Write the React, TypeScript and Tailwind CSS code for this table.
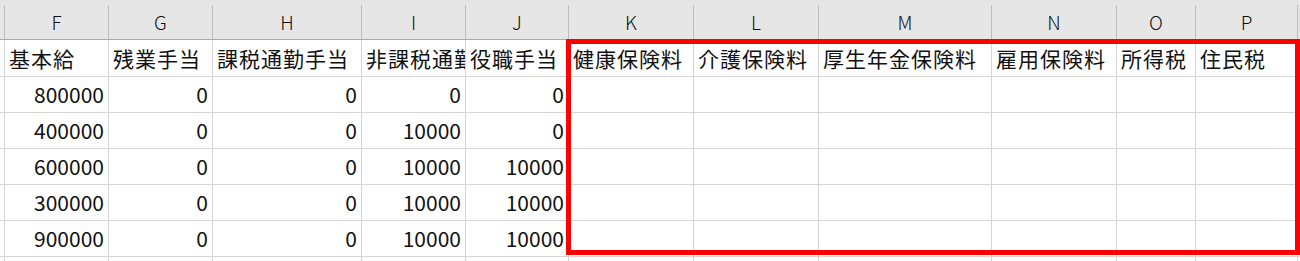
import React from "react";

type Col = { key: string; width: number };

const cols: Col[] = [
  { key: "F", width: 104 },
  { key: "G", width: 104 },
  { key: "H", width: 149 },
  { key: "I", width: 104 },
  { key: "J", width: 103 },
  { key: "K", width: 125 },
  { key: "L", width: 125 },
  { key: "M", width: 173 },
  { key: "N", width: 125 },
  { key: "O", width: 79 },
  { key: "P", width: 102 },
];

const headers = [
  "基本給",
  "残業手当",
  "課税通勤手当",
  "非課税通勤手当",
  "役職手当",
  "健康保険料",
  "介護保険料",
  "厚生年金保険料",
  "雇用保険料",
  "所得税",
  "住民税",
];

const rows: (number | null)[][] = [
  [800000, 0, 0, 0, 0],
  [400000, 0, 0, 10000, 0],
  [600000, 0, 0, 10000, 10000],
  [300000, 0, 0, 10000, 10000],
  [900000, 0, 0, 10000, 10000],
];

const gridTemplate = `5px ${cols.map((c) => c.width + "px").join(" ")} 1fr`;

const font = { fontFamily: '"Noto Sans CJK JP", "Noto Sans", sans-serif' };

export default function App() {
  return (
    <div
      className="relative w-[1300px] h-[261px] overflow-hidden bg-white text-[#111]"
      style={font}
    >
      {/* column letters */}
      <div
        className="grid h-[40px] bg-[#e6e6e6] border-b border-[#ababab]"
        style={{ gridTemplateColumns: gridTemplate }}
      >
        <div className="mt-[5px] border-r border-[#bcbcbc]" />
        {cols.map((c) => (
          <div
            key={c.key}
            className="mt-[5px] border-r border-[#bcbcbc] flex items-center justify-center text-[19px] font-light leading-none pb-[1px]"
          >
            {c.key}
          </div>
        ))}
        <div className="mt-[5px]" />
      </div>

      {/* label row */}
      <div
        className="grid h-[37px] border-b border-[#d4d4d4]"
        style={{ gridTemplateColumns: gridTemplate }}
      >
        <div className="border-r border-[#d4d4d4]" />
        {headers.map((h) => (
          <div
            key={h}
            className="border-r border-[#d4d4d4] flex items-center pl-[4px] text-[21px] tracking-[1px] leading-none whitespace-nowrap overflow-hidden"
          >
            {h}
          </div>
        ))}
        <div />
      </div>

      {/* data rows */}
      {[...rows, []].map((r, ri) => (
        <div
          key={ri}
          className="grid h-[36px] border-b border-[#d4d4d4]"
          style={{ gridTemplateColumns: gridTemplate }}
        >
          <div className="border-r border-[#d4d4d4]" />
          {cols.map((c, ci) => (
            <div
              key={c.key}
              className="border-r border-[#d4d4d4] flex items-center justify-end pr-[4px] text-[21px] leading-none whitespace-nowrap"
            >
              {r[ci] ?? ""}
            </div>
          ))}
          <div />
        </div>
      ))}

      {/* highlighted range K1:P6 */}
      <div className="absolute left-[566px] top-[39px] w-[734px] h-[216px] border-[5px] border-[#ff0000] pointer-events-none" />
    </div>
  );
}
